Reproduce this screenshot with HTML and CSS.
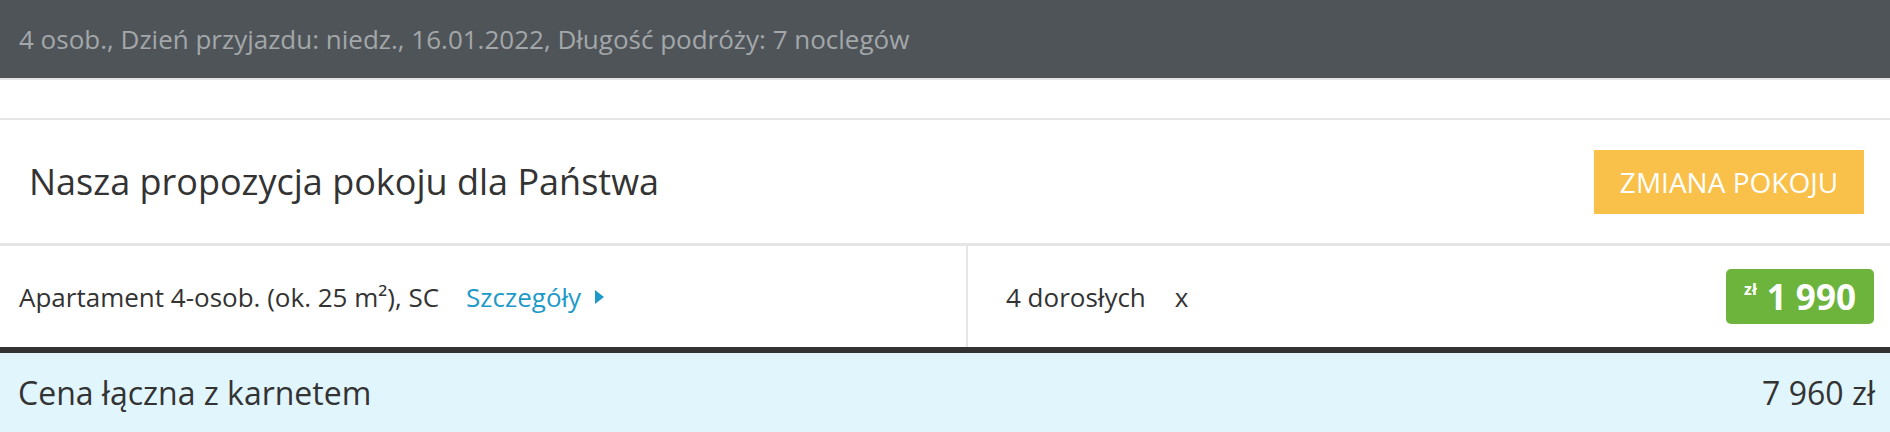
FILE: index.html
```html
<!DOCTYPE html>
<html lang="pl">
<head>
    <meta charset="utf-8">
    <title>Propozycja pokoju</title>
    <link rel="stylesheet" href="styles.css">
</head>
<body>
    <div class="trip-bar">4 osob., Dzień przyjazdu: niedz., 16.01.2022, Długość podróży: 7 noclegów</div>
    <div class="spacer"></div>

    <div class="offer">
        <div class="offer-head">
            <h2>Nasza propozycja pokoju dla Państwa</h2>
            <button type="button" class="btn-change">Zmiana pokoju</button>
        </div>

        <div class="room-row">
            <div class="room-name">
                <span>Apartament 4-osob. (ok. 25 m²), SC</span>
                <a href="#" class="details">Szczegóły <span class="arrow"></span></a>
            </div>
            <div class="room-guests">
                <span>4 dorosłych</span>
                <span class="times">x</span>
                <div class="price-badge"><span class="cur">zł</span><span class="amount">1 990</span></div>
            </div>
        </div>

        <div class="total">
            <span>Cena łączna z karnetem</span>
            <span>7 960 zł</span>
        </div>
    </div>
</body>
</html>
```

FILE: styles.css
```css
body {
    margin: 0;
    font-family: "Open Sans", "Liberation Sans", sans-serif;
    color: #333;
    background: #fff;
}
.trip-bar {
    height: 78px;
    display: flex;
    align-items: center;
    padding: 0 19px;
    background-color: #4f5458;
    color: #a3a7aa;
    font-size: 26px;
    border-bottom: 2px solid #e5e5e5;
}
.spacer {
    height: 38px;
}
.offer {
    border-top: 2px solid #e5e5e5;
}
.offer-head {
    height: 123px;
    display: flex;
    align-items: center;
    justify-content: space-between;
    padding: 0 26px 0 29px;
    border-bottom: 3px solid #e5e5e5;
}
.offer-head h2 {
    margin: 0;
    font-size: 36px;
    font-weight: 400;
    color: #333;
}
.btn-change {
    height: 64px;
    width: 270px;
    padding: 0;
    border: none;
    background-color: #f9c04a;
    color: #fff;
    font-family: inherit;
    font-size: 28px;
    text-transform: uppercase;
    cursor: pointer;
}
.room-row {
    display: grid;
    grid-template-columns: 968px 1fr;
    height: 101px;
    font-size: 26px;
}
.room-name {
    display: flex;
    align-items: center;
    padding-left: 19px;
    border-right: 2px solid #e5e5e5;
}
.details {
    display: flex;
    align-items: center;
    margin-left: 27px;
    color: #1e9ac8;
    text-decoration: none;
}
.arrow {
    width: 0;
    height: 0;
    margin-left: 14px;
    border-top: 7px solid transparent;
    border-bottom: 7px solid transparent;
    border-left: 9px solid #1e9ac8;
}
.room-guests {
    display: flex;
    align-items: center;
    padding: 0 16px 0 38px;
}
.times {
    margin-left: 29px;
}
.price-badge {
    margin-left: auto;
    width: 148px;
    height: 55px;
    box-sizing: border-box;
    display: flex;
    align-items: center;
    justify-content: center;
    background-color: #6cb43c;
    border-radius: 5px;
    color: #fff;
    font-weight: 700;
}
.price-badge .cur {
    font-size: 16px;
    margin-right: 10px;
    position: relative;
    top: -8px;
}
.price-badge .amount {
    font-size: 35px;
}
.total {
    height: 79px;
    display: flex;
    align-items: center;
    justify-content: space-between;
    padding: 0 15px 0 18px;
    border-top: 6px solid #333;
    background-color: #e1f5fd;
    font-size: 32px;
}
```
